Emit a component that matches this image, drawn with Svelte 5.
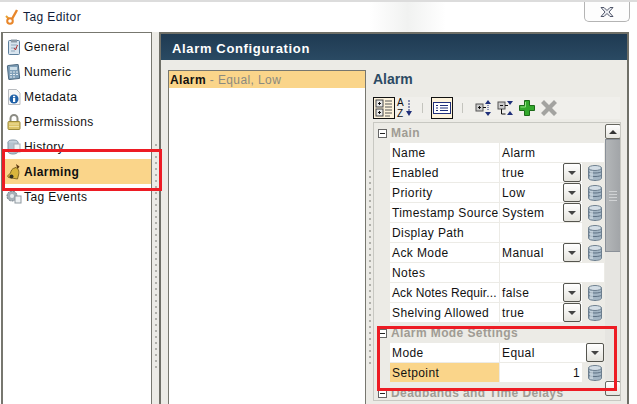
<script>
  const nav = [
    { id: 'general', label: 'General' },
    { id: 'numeric', label: 'Numeric' },
    { id: 'metadata', label: 'Metadata' },
    { id: 'permissions', label: 'Permissions' },
    { id: 'history', label: 'History' },
    { id: 'alarming', label: 'Alarming', active: true },
    { id: 'events', label: 'Tag Events' }
  ];
  const main = [
    { name: 'Name', value: 'Alarm', full: true },
    { name: 'Enabled', value: 'true', drop: true, db: true },
    { name: 'Priority', value: 'Low', drop: true, db: true },
    { name: 'Timestamp Source', value: 'System', drop: true, db: true },
    { name: 'Display Path', value: '', db: true },
    { name: 'Ack Mode', value: 'Manual', drop: true, db: true },
    { name: 'Notes', value: '', full: true },
    { name: 'Ack Notes Requir...', value: 'false', drop: true, db: true, tight: true },
    { name: 'Shelving Allowed', value: 'true', drop: true, db: true }
  ];
  const dots = Array.from({ length: 40 });
</script>

{#snippet navIcon(id)}
  <svg class="navicon" viewBox="0 0 16 16" width="16" height="16">
    {#if id === 'general'}
      <rect x="2.500" y="1.500" width="11" height="14" rx="1" fill="#d8e4ee" stroke="#5d7f9c" />
      <rect x="5" y="0.500" width="6" height="3" fill="#8b99a6" />
      <path d="M5 6h6M5 9h6M5 12h4" stroke="#8fa7bb" />
      <path d="M8 9l1.500 2 2-5" stroke="#b03030" fill="none" />
    {:else if id === 'numeric'}
      <rect x="2" y="1" width="11" height="14" rx="1" transform="rotate(-6 8 8)" fill="#7f9fb8" stroke="#4f6b82" />
      <rect x="4" y="3" width="7" height="3" fill="#cfe0ea" />
      <path d="M4 8h2M7 8h2M10 8h2M4 10.500h2M7 10.500h2M10 10.500h2M4 13h2M7 13h2" stroke="#e5ecf1" />
    {:else if id === 'metadata'}
      <path d="M2.500 .5h8l3.500 3.500v11.500h-11.500z" fill="#f6f6f6" stroke="#b9bcc0" />
      <circle cx="8" cy="10" r="4.500" fill="#1d5fa6" />
      <rect x="7" y="9" width="2.200" height="4" fill="#fff" />
      <rect x="7" y="6.800" width="2.200" height="1.500" fill="#fff" />
    {:else if id === 'permissions'}
      <path d="M4.500 8V4.500a3.500 3.500 0 0 1 7 0V8" fill="none" stroke="#8c8c84" stroke-width="2" />
      <rect x="2" y="7.500" width="12" height="8" rx="1" fill="#dcc468" stroke="#9b8a3a" />
      <path d="M3 10h10M3 12.500h10" stroke="#eee0a0" />
    {:else if id === 'history'}
      <ellipse cx="7" cy="3.500" rx="5" ry="2.500" fill="#c6d2dc" stroke="#8296a6" />
      <path d="M2 3.500v9c0 1.500 2.200 2.500 5 2.500s5-1 5-2.500v-9" fill="#b4c3cf" stroke="#8296a6" />
      <rect x="8" y="5" width="6" height="8" fill="#f1f3f5" stroke="#a8b0b6" />
    {:else if id === 'alarming'}
      <path d="M10 0l3.500 2.500-2 3z" fill="#5c3a14" />
      <path d="M9 4C6 4 5 7 4.500 9l-3 3 1 1.500 9 1.500 1-4c1-3 0-7.500-3.500-7.500z" fill="#d9b53c" stroke="#6f5716" stroke-width=".8" />
      <circle cx="5.500" cy="12.500" r="2" fill="#2f2f26" />
    {:else}
      <circle cx="6" cy="7" r="5" fill="#a6b0b8" stroke="#6e7a84" stroke-dasharray="2 1" />
      <circle cx="6" cy="7" r="2" fill="#e8ecef" />
      <rect x="9" y="7" width="6" height="7" fill="#eef1f3" stroke="#8e989f" />
    {/if}
  </svg>
{/snippet}

{#snippet dbIcon()}
  <svg class="db" viewBox="0 0 14 16" width="14" height="16">
    <path d="M.5 3v10c0 1.500 2.900 2.500 6.500 2.500s6.500-1 6.500-2.500V3z" fill="#a3b5c4" stroke="#6f8090" />
    <ellipse cx="7" cy="3" rx="6.500" ry="2.500" fill="#d3dde5" stroke="#6f8090" />
    <path d="M.5 6.500c1 2 12 2 13 0M.5 10c1 2 12 2 13 0" fill="none" stroke="#5f7284" />
    <rect x="2" y="6" width="3" height="8" fill="#d8e2ea" opacity=".6" />
  </svg>
{/snippet}

{#snippet dropBtn()}
  <span class="dropbtn"><i></i></span>
{/snippet}

{#snippet propRow(r)}
  <div class="row">
    <div class="pname" class:sel={r.sel} class:tight={r.tight}>{r.name}</div>
    <div class="pval" class:full={r.full} class:wide={r.wide} class:num={r.num}>
      <span>{r.value}</span>
      {#if r.drop && !r.wide}{@render dropBtn()}{/if}
    </div>
    {#if r.wide}{@render dropBtn()}{/if}
    {#if r.db}<div class="pact">{@render dbIcon()}</div>{/if}
  </div>
{/snippet}

{#snippet section(title)}
  <div class="sec">
    <span class="minus"></span>
    <b>{title}</b>
  </div>
{/snippet}

<div class="win">
  <header class="title">
    <svg class="logo" viewBox="0 0 14 16" width="14" height="16">
      <path d="M12 1L7 10" stroke="#e8862a" stroke-width="2.400" fill="none" />
      <path d="M1 7l3 3" stroke="#e8a030" stroke-width="2" />
      <circle cx="5" cy="12" r="2.800" fill="none" stroke="#e8862a" stroke-width="2" />
    </svg>
    <span class="ttext">Tag Editor</span>
    <div class="close">
      <svg viewBox="0 0 16 12" width="16" height="12">
        <path d="M2 1.500h3L8 4.500l3-3h3L10 6l4 4.500h-3L8 7.500l-3 3H2L6 6z" fill="#eef0f4" stroke="#50566a" />
      </svg>
    </div>
  </header>

  <div class="body">
    <aside class="side">
      {#each nav as n}
        <div class="nav" class:active={n.active}>
          {@render navIcon(n.id)}
          <span>{n.label}</span>
        </div>
      {/each}
    </aside>
    <div class="split">
      {#each dots.slice(0, 38) as _}<i></i>{/each}
    </div>
    <main class="panel">
      <div class="phead">Alarm Configuration</div>
      <div class="pbody">
        <div class="list">
          <div class="item"><b>Alarm</b> <em>- Equal, Low</em></div>
        </div>
        <div class="split2">
          {#each dots.slice(0, 33) as _}<i></i>{/each}
        </div>
        <div class="editor">
          <h2>Alarm</h2>
          <div class="tools">
            <span class="tbtn on">
              <svg viewBox="0 0 18 18" width="18" height="18">
                <rect x="1" y="1" width="7" height="7" fill="#e8e8e8" stroke="#444" />
                <rect x="1" y="10" width="7" height="7" fill="#e8e8e8" stroke="#444" />
                <path d="M3 4.500h3M4.500 3v3M3 13.500h3M4.500 12v3" stroke="#111" />
                <path d="M10 2h7M10 5h7M10 8h7M10 11h7M10 14h7M10 17h5" stroke="#555" />
              </svg>
            </span>
            <span class="tbtn plain az">
              <svg viewBox="0 0 16 18" width="16" height="18">
                <path d="M11 1v13" stroke="#20307a" stroke-dasharray="2 1" />
                <path d="M8 12h6l-3 5z" fill="#20307a" />
              </svg>
              <span class="azt">A<br />Z</span>
            </span>
            <span class="sep"></span>
            <span class="tbtn on">
              <svg viewBox="0 0 18 12" width="18" height="12">
                <rect x=".5" y=".5" width="17" height="11" fill="#fff" stroke="#20307a" />
                <path d="M3 3.500h2M7 3.500h8M3 6h2M7 6h8M3 8.500h2M7 8.500h8" stroke="#20307a" />
              </svg>
            </span>
            <span class="sep"></span>
            <svg class="ticon first" viewBox="0 0 16 18" width="16" height="18">
              <rect x="1" y="5" width="7" height="7" fill="#ccc" stroke="#555" />
              <path d="M3 8.500h3M4.500 7v3M8 8.500h3" stroke="#111" />
              <path d="M13 1l3 4h-6zM13 17l3-4h-6z" fill="#20307a" />
              <path d="M13 6v6" stroke="#20307a" stroke-dasharray="1 1" />
            </svg>
            <svg class="ticon" viewBox="0 0 16 18" width="16" height="18">
              <rect x="1" y="3" width="7" height="7" fill="#ccc" stroke="#555" />
              <path d="M3 6.500h3M4.500 10v5h4M8 6.500h3" stroke="#111" fill="none" />
              <path d="M13 6l3-4h-6zM13 12l3 4h-6z" fill="#20307a" />
            </svg>
            <svg class="ticon" viewBox="0 0 16 16" width="16" height="16">
              <path d="M5.500 .5h5v5h5v5h-5v5h-5v-5h-5v-5h5z" fill="#33a82c" stroke="#1c6a18" />
              <path d="M6.500 2v5h-5" fill="none" stroke="#8fe080" />
            </svg>
            <svg class="ticon" viewBox="0 0 16 16" width="16" height="16">
              <path d="M3 0l5 5 5-5 3 3-5 5 5 5-3 3-5-5-5 5-3-3 5-5-5-5z" fill="#a3a3a0" />
            </svg>
          </div>
          <div class="grid">
            <div class="gcontent">
              {@render section('Main')}
              <div class="rows">
                {#each main as r}{@render propRow(r)}{/each}
              </div>
              {@render section('Alarm Mode Settings')}
              <div class="rows">
                {@render propRow({ name: 'Mode', value: 'Equal', drop: true, wide: true })}
                {@render propRow({ name: 'Setpoint', value: '1', db: true, sel: true, num: true })}
              </div>
              {@render section('Deadbands and Time Delays')}
            </div>
            <div class="sbar">
              <span class="sbtn"><i></i></span>
              <span class="thumb"><u></u></span>
              <span class="strack"></span>
              <span class="sbtn"></span>
            </div>
          </div>
        </div>
      </div>
    </main>
  </div>

  <div class="mark m1"></div>
  <div class="mark m2"></div>
</div>

<style>
  :global(body) { margin: 0; background: #fff; }
  .win {
    position: relative;
    width: 637px;
    height: 404px;
    overflow: hidden;
    background: #fff;
    font-family: "Liberation Sans", Arial, sans-serif;
    font-size: 12px;
    letter-spacing: 0.4px;
    color: #111;
    display: flex;
    flex-direction: column;
  }
  .title {
    height: 32px;
    flex: none;
    display: flex;
    align-items: center;
    padding: 0 7px 0 5px;
    box-sizing: border-box;
    background: linear-gradient(90deg, #fff 0 58%, #f1f2f1 64%, #fff 70%);
    border-top: 2px solid #dcdcdc;
  }
  .logo { margin-right: 4px; }
  .ttext { font-size: 12px; color: #101d3a; }
  .close {
    margin-left: auto;
    align-self: flex-start;
    width: 46px;
    height: 20px;
    border: 1px solid #b4b4b4;
    border-top: none;
    border-radius: 0 0 5px 5px;
    box-sizing: border-box;
    display: flex;
    align-items: center;
    justify-content: center;
    background: #fdfdfd;
  }
  .body {
    flex: 1;
    min-height: 0;
    display: flex;
    padding-left: 1px;
  }
  .side {
    width: 151px;
    box-sizing: border-box;
    flex: none;
    border: 1px solid #77776f;
    border-left-width: 2px;
    border-bottom: none;
    padding-top: 1px;
    background: #fff;
  }
  .nav {
    height: 25px;
    display: flex;
    align-items: center;
    gap: 2px;
    padding-left: 3px;
  }
  .navicon { flex: none; }
  .nav.active { background: #fad58a; font-weight: 700; }
  .split {
    width: 7px;
    flex: none;
    box-sizing: border-box;
    background: #ecebe6;
    display: flex;
    flex-direction: column;
    align-items: center;
    gap: 4px;
    padding-top: 112px;
  }
  .split i, .split2 i { width: 2px; height: 2px; background: #b0b0aa; flex: none; }
  .panel {
    width: 470px;
    flex: none;
    box-sizing: border-box;
    border: 2px solid #6f6f67;
    border-bottom: none;
    background: #ecebe6;
    display: flex;
    flex-direction: column;
    min-height: 0;
  }
  .phead {
    height: 26px;
    flex: none;
    box-sizing: border-box;
    background: linear-gradient(180deg, #1f3a52, #2a4a63);
    color: #fff;
    font-weight: 700;
    font-size: 13px;
    letter-spacing: 0.65px;
    display: flex;
    align-items: center;
    padding: 2px 0 0 11px;
  }
  .pbody {
    flex: 1;
    min-height: 0;
    display: flex;
    padding: 10px 0 0 7px;
  }
  .list {
    width: 198px;
    flex: none;
    box-sizing: border-box;
    background: #fff;
    border: 1px solid #77776f;
    border-bottom: none;
  }
  .item { height: 17px; line-height: 18px; background: #fad58a; padding-left: 1px; }
  .item em { font-style: normal; color: #8a8a80; }
  .split2 {
    width: 7px;
    flex: none;
    display: flex;
    flex-direction: column;
    align-items: center;
    gap: 4px;
    padding-top: 100px;
    box-sizing: border-box;
  }
  .editor { flex: 1; min-width: 0; display: flex; flex-direction: column; padding-right: 7px; }
  h2 {
    margin: 0;
    height: 17px;
    font-size: 14px;
    line-height: 19px;
    color: #2c4a63;
    font-weight: 700;
    letter-spacing: 0;
  }
  .tools {
    margin-top: 10px;
    height: 22px;
    flex: none;
    display: flex;
    align-items: center;
    background: #f0efeb;
  }
  .tbtn {
    width: 22px;
    height: 22px;
    box-sizing: border-box;
    display: flex;
    align-items: center;
    justify-content: center;
    position: relative;
  }
  .tbtn.on { background: #fdf3dc; border: 1px solid #111; }
  .tbtn.plain { margin-left: 1px; width: 20px; }
  .azt {
    position: absolute;
    left: 1px;
    top: 0;
    font-size: 10px;
    line-height: 11px;
    letter-spacing: 0;
  }
  .sep { width: 1px; height: 10px; background: #c4c4be; margin: 0 9px; }
  .sep:nth-of-type(3) { margin: 0 8px 0 6px; }
  .ticon { margin-left: 6px; flex: none; }
  .ticon.first { margin-left: 3px; }
  .grid {
    margin-top: 3px;
    width: 248px;
    height: 279px;
    flex: none;
    box-sizing: border-box;
    border: 1px solid #c8c8c2;
    display: flex;
    overflow: hidden;
  }
  .gcontent { width: 230px; flex: none; }
  .sec {
    height: 20px;
    display: flex;
    align-items: center;
    gap: 4px;
    padding-left: 4px;
    color: #a09c94;
  }
  .sec b { font-weight: 700; }
  .minus {
    width: 7px;
    height: 7px;
    background: #fff;
    border: 1px solid #666;
    position: relative;
    flex: none;
  }
  .minus::after {
    content: "";
    position: absolute;
    left: 1px;
    right: 1px;
    top: 3px;
    height: 1px;
    background: #222;
  }
  .rows { margin-left: 16px; }
  .row {
    height: 19px;
    margin-bottom: 1px;
    display: flex;
    line-height: 21px;
  }
  .pname {
    width: 109px;
    flex: none;
    box-sizing: border-box;
    background: #fff;
    padding-left: 2px;
    margin-right: 1px;
    white-space: nowrap;
    overflow: hidden;
  }
  .pname.tight { letter-spacing: 0.1px; }
  .pname.sel { background: #fad58a; }
  .pval {
    width: 82px;
    flex: none;
    box-sizing: border-box;
    background: #fff;
    padding-left: 2px;
    display: flex;
    justify-content: space-between;
  }
  .pval.full { width: 104px; }
  .pval.wide { width: 86px; }
  .pval.num { justify-content: flex-end; padding-right: 2px; }
  .pact { width: 22px; box-sizing: border-box; display: flex; align-items: center; padding-left: 6px; }
  .db { flex: none; }
  .dropbtn {
    width: 18px;
    height: 19px;
    box-sizing: border-box;
    border: 1px solid #55554f;
    border-radius: 2px;
    background: linear-gradient(180deg, #fff, #e4e3dd);
    display: flex;
    align-items: center;
    justify-content: center;
    flex: none;
    margin-right: 1px;
  }
  .pval.wide + .dropbtn { margin-right: 0; }
  .dropbtn i {
    width: 0;
    height: 0;
    border: 4px solid transparent;
    border-top: 4px solid #444;
    border-bottom: none;
  }
  .sbar {
    width: 16px;
    flex: none;
    margin-left: 1px;
    display: flex;
    flex-direction: column;
  }
  .sbtn {
    height: 15px;
    flex: none;
    box-sizing: border-box;
    border: 1px solid #66665f;
    border-radius: 2px;
    background: linear-gradient(180deg, #fff, #e6e5df);
    display: flex;
    align-items: center;
    justify-content: center;
    margin-top: 1px;
  }
  .sbtn i {
    width: 0;
    height: 0;
    border: 4px solid transparent;
    border-bottom: 4px solid #333;
    border-top: none;
  }
  .thumb {
    height: 113px;
    flex: none;
    box-sizing: border-box;
    border: 1px solid #8a9098;
    background: linear-gradient(90deg, #b3b6b8, #a2a5a8);
    display: flex;
    align-items: center;
    justify-content: center;
  }
  .thumb u {
    display: block;
    width: 8px;
    height: 10px;
    background: repeating-linear-gradient(180deg, #d0d2d4 0 1px, transparent 1px 3px);
  }
  .strack { height: 128px; flex: none; background: #e6e5e1; }
  .mark {
    position: absolute;
    box-sizing: border-box;
    border: 3px solid #ed1c24;
    pointer-events: none;
  }
  .m1 { left: 2px; top: 149px; width: 160px; height: 42px; }
  .m2 { left: 377px; top: 326px; width: 240px; height: 65px; }
</style>
